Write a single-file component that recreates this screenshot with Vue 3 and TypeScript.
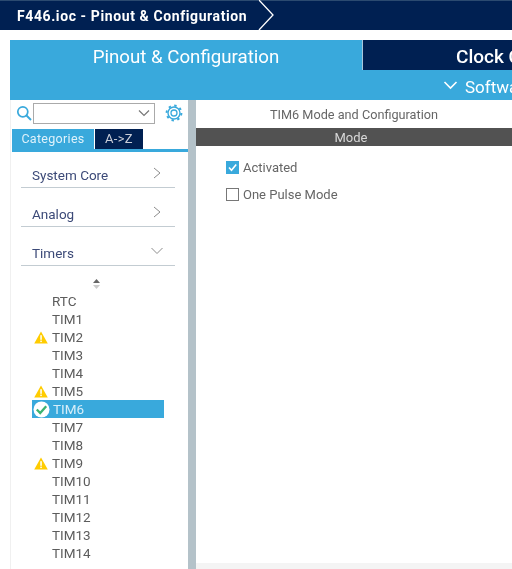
<script setup lang="ts">
interface Item { name: string; state?: 'warn' | 'ok' }
const items: Item[] = [
  { name: 'RTC' }, { name: 'TIM1' }, { name: 'TIM2', state: 'warn' }, { name: 'TIM3' }, { name: 'TIM4' },
  { name: 'TIM5', state: 'warn' }, { name: 'TIM6', state: 'ok' }, { name: 'TIM7' }, { name: 'TIM8' },
  { name: 'TIM9', state: 'warn' }, { name: 'TIM10' }, { name: 'TIM11' }, { name: 'TIM12' }, { name: 'TIM13' }, { name: 'TIM14' },
]
const cats = [
  { name: 'System Core', open: false },
  { name: 'Analog', open: false },
  { name: 'Timers', open: true },
]
</script>

<template>
  <div class="page">
    <header class="crumb">
      <span class="crumb-text">F446.ioc - Pinout &amp; Configuration</span>
      <svg class="crumb-arrow" width="20" height="30" viewBox="0 0 20 30"><path d="M0 0H2L15 15L2 30H0Z" fill="#002052"/><path d="M1 0L15 15L1 30" fill="none" stroke="#fff" stroke-width="1.3"/></svg>
    </header>
    <div class="main">
      <div class="head">
        <div class="tabs">
          <div class="tab tab-on">Pinout &amp; Configuration</div>
          <div class="tab tab-off"><span class="clock">Clock Configuration</span></div>
        </div>
        <div class="soft">
          <svg width="15" height="10" viewBox="0 0 15 10"><path d="M1.5 2L7.5 8L13.5 2" fill="none" stroke="#fff" stroke-width="1.6"/></svg>
          <span>Software Packs</span>
        </div>
      </div>
      <div class="body">
        <aside class="side">
          <div class="search">
            <svg class="mag" width="16" height="16" viewBox="0 0 16 16"><circle cx="6.8" cy="6.8" r="5" fill="none" stroke="#39a9dc" stroke-width="1.7"/><path d="M10.5 10.5L15 15" stroke="#39a9dc" stroke-width="2"/></svg>
            <div class="combo">
              <svg width="12" height="8" viewBox="0 0 12 8"><path d="M1 1.5L6 6.5L11 1.5" fill="none" stroke="#777" stroke-width="1.2"/></svg>
            </div>
            <svg class="gear" width="18" height="18" viewBox="0 0 18 18">
              <circle cx="9" cy="9" r="6" fill="none" stroke="#39a9dc" stroke-width="1.4"/>
              <circle cx="9" cy="9" r="3" fill="none" stroke="#39a9dc" stroke-width="1.3"/>
              <circle cx="9" cy="9" r="7.4" fill="none" stroke="#39a9dc" stroke-width="2" stroke-dasharray="2.4 3.41"/>
            </svg>
          </div>
          <div class="subtabs">
            <div class="sub sub-on">Categories</div>
            <div class="sub sub-off">A-&gt;Z</div>
          </div>
          <div class="cats">
            <div v-for="c in cats" :key="c.name" class="cat">
              <span>{{ c.name }}</span>
              <svg v-if="!c.open" width="10" height="12" viewBox="0 0 10 12"><path d="M2 1L8 6L2 11" fill="none" stroke="#8c8c8c" stroke-width="1"/></svg>
              <svg v-else class="down" width="12" height="8" viewBox="0 0 12 8"><path d="M.5 1L6 6.5L11.5 1" fill="none" stroke="#8c8c8c" stroke-width="1"/></svg>
            </div>
          </div>
          <svg class="sort" width="9" height="12" viewBox="0 0 9 12"><path d="M4.5 1L8 5H1Z" fill="#666"/><path d="M4.5 11L8 7H1Z" fill="#ccc"/></svg>
          <ul class="list">
            <li v-for="it in items" :key="it.name" :class="{ sel: it.state === 'ok' }">
              <span class="ico">
                <svg v-if="it.state === 'warn'" width="14" height="13" viewBox="0 0 14 13"><path d="M7 .5L13.8 12.5H.2Z" fill="#ffcc00"/><rect x="6.3" y="4.2" width="1.5" height="4.6" fill="#fff"/><rect x="6.3" y="9.6" width="1.5" height="1.5" fill="#fff"/></svg>
                <svg v-else-if="it.state === 'ok'" width="17" height="17" viewBox="0 0 17 17"><circle cx="8.5" cy="8.5" r="8" fill="#fff"/><path d="M3.8 8.5L7.2 12L13.2 5.2" fill="none" stroke="#3cb371" stroke-width="2.3"/></svg>
              </span>
              <span class="nm">{{ it.name }}</span>
            </li>
          </ul>
        </aside>
        <div class="split"></div>
        <section class="content">
          <div class="title">TIM6 Mode and Configuration</div>
          <div class="mode">Mode</div>
          <div class="opts">
            <label class="opt">
              <span class="box box-on"><svg width="11" height="11" viewBox="0 0 11 11"><path d="M2 5.5L4.5 8.3L9.2 2.5" fill="none" stroke="#fff" stroke-width="1.6"/></svg></span>
              Activated
            </label>
            <label class="opt">
              <span class="box"></span>
              One Pulse Mode
            </label>
          </div>
        </section>
      </div>
    </div>
  </div>
</template>

<style>
html, body { margin: 0; padding: 0; background: #fff; overflow: hidden; }
</style>

<style scoped>
.page { width: 512px; height: 569px; overflow: hidden; font-family: Roboto, "Liberation Sans", sans-serif; background: #fff; display: flex; flex-direction: column; filter: blur(0.35px); }
.crumb { height: 30px; background: #002052; border-top: 1px solid #2b4a70; box-sizing: border-box; display: flex; align-items: center; flex: none; position: relative; }
.crumb-text { color: #fff; font-size: 14px; font-weight: 700; letter-spacing: .6px; padding-left: 17px; width: 241px; white-space: nowrap; padding-top: 1px; }
.crumb-arrow { margin-top: -1px; }
.main { flex: 1; min-height: 0; margin: 10px 0 0 10px; display: flex; flex-direction: column; }
.head { height: 60px; background: #39a9dc; flex: none; overflow: hidden; }
.tabs { display: flex; height: 30px; }
.tab { font-size: 18.7px; line-height: 34px; color: #fff; white-space: nowrap; }
.tab-on { width: 352px; text-align: center; }
.tab-off { flex: 1; background: #002052; border-left: 1px solid #a9c7dc; overflow: hidden; box-sizing: border-box; }
.clock { margin-left: 93px; font-size: 19px; font-weight: 500; }
.soft { height: 30px; display: flex; align-items: center; padding-left: 433px; gap: 7px; color: #fff; font-size: 17px; white-space: nowrap; overflow: hidden; }
.soft span { padding-top: 3px; }
.soft svg { flex: none; }
.body { flex: 1; min-height: 0; display: flex; background: #f4f4f4; }
.side { width: 178px; flex: none; background: #fff; display: flex; flex-direction: column; border-left: 1px solid #f0f0f0; box-sizing: border-box; position: relative; }
.search { height: 26px; display: flex; align-items: center; padding-left: 5px; flex: none; }
.mag { flex: none; }
.combo { width: 120px; height: 19px; margin-left: 1px; border: 1px solid #aaa; display: flex; align-items: center; justify-content: flex-end; }
.combo svg { margin-right: 4px; }
.gear { margin-left: 10px; flex: none; }
.subtabs { display: flex; height: 20px; margin-left: 1px; margin-top: 3px; border-bottom: 3px solid #39a9dc; width: 176px; flex: none; }
.sub { font-size: 12.5px; line-height: 20px; text-align: center; letter-spacing: .3px; }
.sub-on { background: #39a9dc; color: #dff2fb; width: 82px; margin-right: 1px; }
.sub-off { background: #002052; color: #c9ced8; width: 48px; font-size: 13px; }
.cats { display: flex; flex-direction: column; gap: 12px; margin: 9px 13px 0 10px; flex: none; }
.cat { height: 27px; display: flex; align-items: center; justify-content: space-between; border-bottom: 1px solid #c3ccd2; color: #3c4a78; font-size: 13.5px; box-sizing: border-box; padding: 0 13px 0 11px; }
.cat span { padding-top: 2px; }
.cat svg { margin-top: -2px; }
.cat .down { margin-right: -1px; margin-top: -3px; }
.sort { margin: 12px 0 0 81px; flex: none; }
.list { list-style: none; margin: 2px 0 0; padding: 0; }
.list li { height: 18px; display: flex; align-items: center; margin-left: 21px; width: 132px; color: #5c5c5c; font-size: 13.5px; line-height: 18px; }
.list li.sel { background: #39a9dc; color: #d7eef9; }
.ico { width: 20px; flex: none; display: flex; align-items: center; margin-right: 0; padding-left: 2px; box-sizing: border-box; }
.sel .ico { margin-right: 1px; padding-left: 1px; }
.split { width: 8px; background: #b4c2c9; flex: none; }
.content { flex: 1; background: #fff; min-width: 0; margin-bottom: 6px; }
.title { height: 28px; line-height: 30px; text-align: center; color: #666; font-size: 12.7px; width: 316px; }
.mode { height: 18px; line-height: 20px; background: #525252; color: #d8d8d8; font-size: 13px; text-align: center; width: 310px; padding-right: 6px; }
.opts { padding: 12px 0 0 30px; display: flex; flex-direction: column; gap: 9px; }
.opt { display: flex; align-items: center; gap: 4px; color: #666; font-size: 13px; height: 18px; }
.box { width: 11px; height: 11px; border: 1px solid #777; display: inline-flex; background: #fff; }
.box-on { background: #39a9dc; border-color: #39a9dc; }
</style>
